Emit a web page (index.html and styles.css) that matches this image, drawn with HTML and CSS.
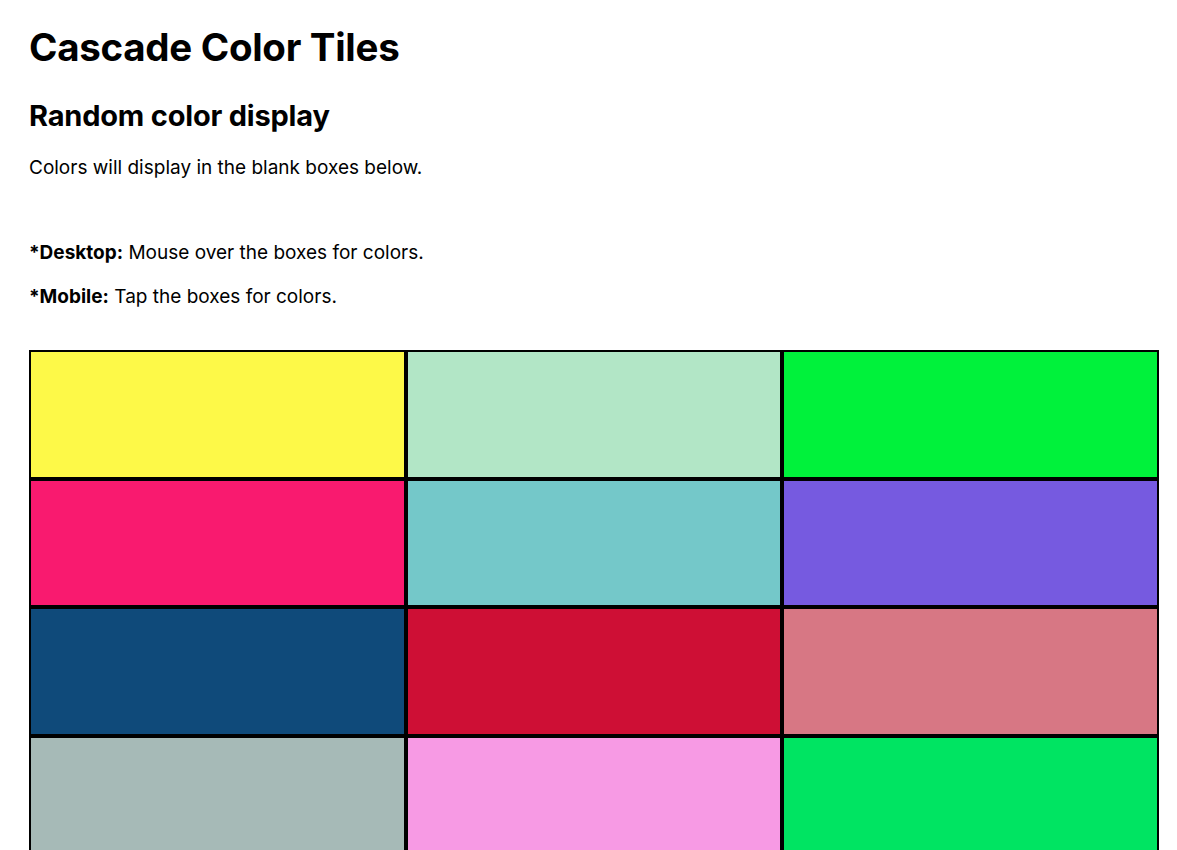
FILE: index.html
```html
<!DOCTYPE html>
<html lang="en">
<head>
<meta charset="utf-8">
<title>Cascade Color Tiles</title>
<link rel="stylesheet" href="styles.css">
</head>
<body>
<main class="page">
  <h1 class="title">Cascade Color Tiles</h1>
  <h2 class="subtitle">Random color display</h2>
  <p class="intro">Colors will display in the blank boxes below.</p>
  <p class="note"><strong>*Desktop:</strong> Mouse over the boxes for colors.</p>
  <p class="note"><strong>*Mobile:</strong> Tap the boxes for colors.</p>
  <div class="tiles">
    <div class="tile t1"></div>
    <div class="tile t2"></div>
    <div class="tile t3"></div>
    <div class="tile t4"></div>
    <div class="tile t5"></div>
    <div class="tile t6"></div>
    <div class="tile t7"></div>
    <div class="tile t8"></div>
    <div class="tile t9"></div>
    <div class="tile t10"></div>
    <div class="tile t11"></div>
    <div class="tile t12"></div>
  </div>
</main>
</body>
</html>
```

FILE: styles.css
```css
html, body {
  margin: 0;
  padding: 0;
  background: #fff;
}
body {
  font-family: Inter, "Noto Sans", "Liberation Sans", sans-serif;
  color: #000;
}
.page {
  padding: 22px 18px 0 29px;
}
.title {
  font-size: 38.5px;
  font-weight: 700;
  margin: 0;
  line-height: 50px;
  letter-spacing: -0.3px;
}
.subtitle {
  font-size: 29px;
  font-weight: 700;
  margin: 26px 0 0;
  line-height: 36px;
  letter-spacing: -0.2px;
}
.intro {
  font-size: 19px;
  line-height: 24px;
  margin: 22px 0 0;
}
.note {
  font-size: 19px;
  line-height: 24px;
  margin: 20px 0 0;
}
.note strong {
  font-weight: 700;
}
.intro + .note {
  margin-top: 61px;
}
.tiles {
  margin-top: 41px;
  display: grid;
  grid-template-columns: repeat(3, 1fr);
  width: 1130px;
}
.tile {
  box-sizing: border-box;
  height: 128.67px;
  border: 2px solid #000;
}
.t1 { background: #fdf948; }
.t2 { background: #b2e6c6; }
.t3 { background: #00f23b; }
.t4 { background: #f91a6f; }
.t5 { background: #74c8c9; }
.t6 { background: #765ae0; }
.t7 { background: #0f4a7a; }
.t8 { background: #ce0f35; }
.t9 { background: #d77784; }
.t10 { background: #a6bab7; }
.t11 { background: #f79ae4; }
.t12 { background: #00e462; }
```
